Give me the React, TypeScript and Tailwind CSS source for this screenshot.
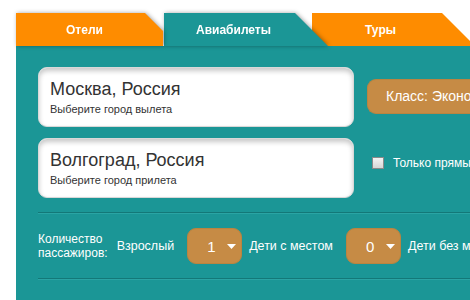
import React from "react";

const font = { fontFamily: '"Liberation Sans", Arial, sans-serif' };

function Arrow() {
  return (
    <svg width="9" height="5" viewBox="0 0 9 5" className="block">
      <path d="M0 0 L9 0 L4.5 5 Z" fill="#fff" />
    </svg>
  );
}

function Select({ value }: { value: string }) {
  return (
    <div className="flex h-[36px] w-[55px] items-center rounded-[9px] border border-[#b98440] bg-[#c68b45] pl-[19px] gap-[12px]">
      <span className="text-[15px] text-white leading-none">{value}</span>
      <Arrow />
    </div>
  );
}

function CityInput({ city, hint }: { city: string; hint: string }) {
  return (
    <div className="flex h-[60px] w-[316px] flex-col rounded-[9px] border border-[#d8d8d8] bg-white pl-[11px] pt-[11px] shadow-[inset_0_3px_5px_rgba(0,0,0,0.22)]">
      <span className="text-[18px] leading-[21px] text-[#333]">{city}</span>
      <span className="mt-[3px] text-[11px] leading-[13px] text-[#333]">{hint}</span>
    </div>
  );
}

function Separator() {
  return (
    <div className="flex flex-col">
      <div className="h-px bg-[#137878]" />
      <div className="h-px bg-[#2aa4a4]" />
    </div>
  );
}

export default function App() {
  return (
    <div className="h-[300px] w-[470px] overflow-hidden bg-white" style={font}>
      <div className="flex pl-[16px] pt-[13px] h-[46px]">
        <div className="relative z-20 [filter:drop-shadow(1px_0_2px_rgba(0,0,0,0.35))]">
          <div className="flex h-[33px] w-[148px] items-center bg-[#fe8c00] pl-[50px] [clip-path:polygon(0_0,129px_0,147px_18px,147px_33px,0_33px)]">
            <span className="text-[12px] font-bold text-white">Отели</span>
          </div>
        </div>
        <div className="relative z-10 [filter:drop-shadow(1px_0_2px_rgba(0,0,0,0.35))]">
          <div className="flex h-[33px] w-[164px] items-center bg-[#1b9696] pl-[32px] [clip-path:polygon(0_0,131px_0,164px_33px,0_33px)]">
            <span className="text-[12px] font-bold text-white">Авиабилеты</span>
          </div>
        </div>
        <div className="relative z-0 -ml-[16px]">
          <div className="flex h-[33px] w-[170px] items-center bg-[#fe8c00] pl-[53px] [clip-path:polygon(0_0,130px_0,163px_33px,0_33px)]">
            <span className="text-[12px] font-bold text-white">Туры</span>
          </div>
        </div>
      </div>
      <div className="ml-[16px] h-[254px] bg-[#1b9696] pl-[22px] pt-[21px]">
        <div className="flex gap-[13px]">
          <div className="flex flex-col gap-[11px]">
            <CityInput city="Москва, Россия" hint="Выберите город вылета" />
            <CityInput city="Волгоград, Россия" hint="Выберите город прилета" />
          </div>
          <div className="flex flex-col pt-[12px]">
            <div className="flex h-[35px] w-[140px] items-center rounded-l-[9px] border border-r-0 border-[#b98440] bg-[#c68b45] pl-[18px] whitespace-nowrap">
              <span className="text-[14px] text-white">Класс: Эконом</span>
            </div>
            <div className="mt-[40px] flex items-center gap-[9px] pl-[5px] whitespace-nowrap">
              <div className="h-[12px] w-[12px] border border-[#8a8a8a] bg-gradient-to-b from-[#f4f4f4] to-[#d6d6d6]" />
              <span className="text-[12px] text-white">Только прямые рейсы</span>
            </div>
          </div>
        </div>
        <div className="mt-[14px]">
          <Separator />
        </div>
        <div className="flex h-[64px] items-center whitespace-nowrap">
          <div className="flex flex-col text-[12px] leading-[14px] text-white">
            <span>Количество</span>
            <span>пассажиров:</span>
          </div>
          <span className="ml-[9px] text-[12.5px] text-white">Взрослый</span>
          <div className="ml-[13px]">
            <Select value="1" />
          </div>
          <span className="ml-[7px] text-[12.5px] text-white">Дети с местом</span>
          <div className="ml-[13px]">
            <Select value="0" />
          </div>
          <span className="ml-[7px] text-[12.5px] text-white">Дети без места</span>
        </div>
        <Separator />
      </div>
    </div>
  );
}
